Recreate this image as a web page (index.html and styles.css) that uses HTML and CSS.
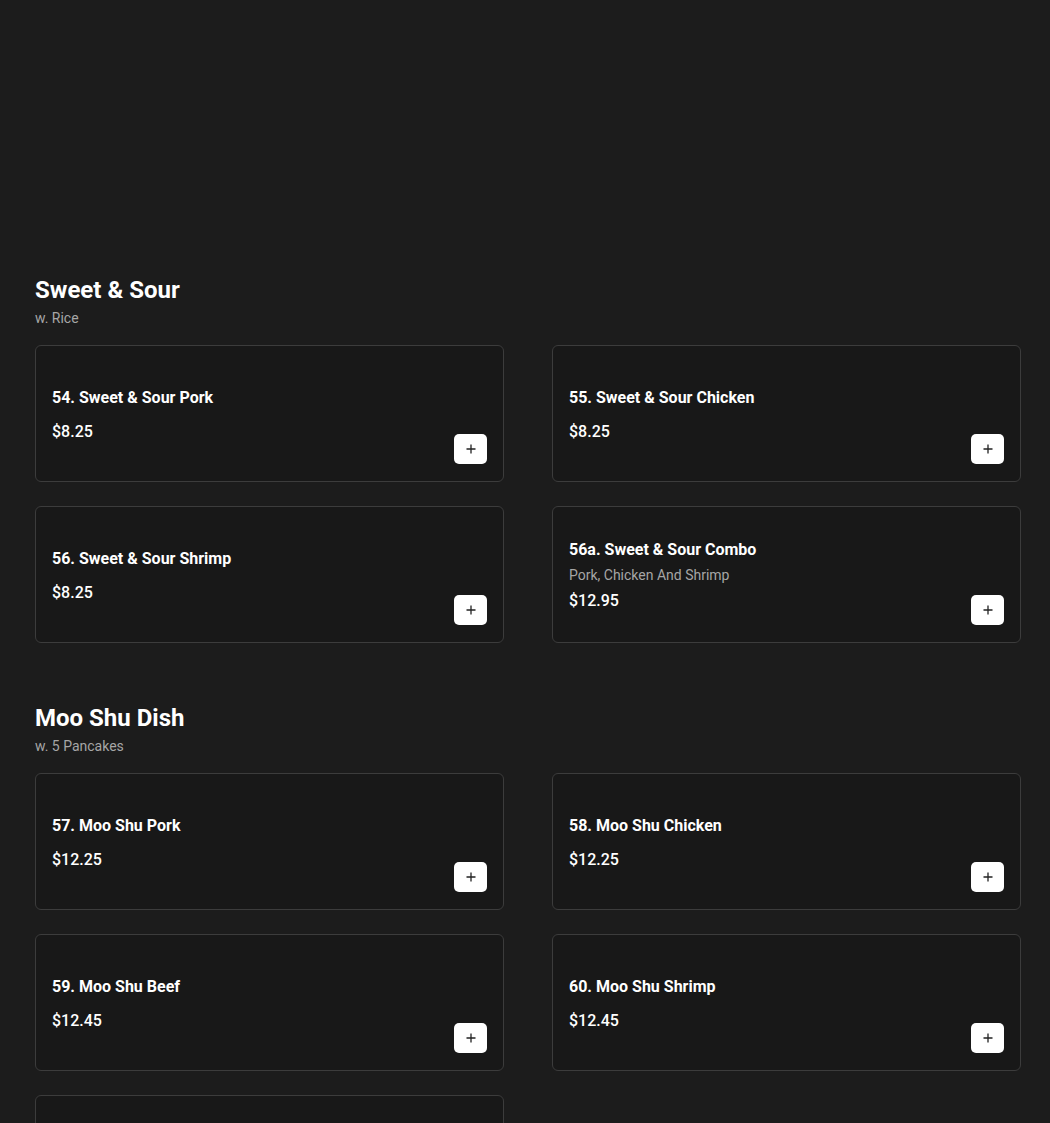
FILE: index.html
```html
<!DOCTYPE html>
<html>
<head>
<meta charset="utf-8">
<link rel="stylesheet" href="styles.css">
</head>
<body>
<main class="menu">
  <section class="category">
    <h2 class="cat-title">Sweet &amp; Sour</h2>
    <p class="cat-sub">w. Rice</p>
    <div class="grid">
      <div class="card"><div class="info"><h3 class="name">54. Sweet &amp; Sour Pork</h3><p class="price">$8.25</p></div><button class="add"><svg viewBox="0 0 12 12" width="12" height="12"><path d="M6 1.5v9M1.5 6h9" stroke="#222" stroke-width="1.3"/></svg></button></div>
      <div class="card"><div class="info"><h3 class="name">55. Sweet &amp; Sour Chicken</h3><p class="price">$8.25</p></div><button class="add"><svg viewBox="0 0 12 12" width="12" height="12"><path d="M6 1.5v9M1.5 6h9" stroke="#222" stroke-width="1.3"/></svg></button></div>
      <div class="card"><div class="info"><h3 class="name">56. Sweet &amp; Sour Shrimp</h3><p class="price">$8.25</p></div><button class="add"><svg viewBox="0 0 12 12" width="12" height="12"><path d="M6 1.5v9M1.5 6h9" stroke="#222" stroke-width="1.3"/></svg></button></div>
      <div class="card"><div class="info"><h3 class="name">56a. Sweet &amp; Sour Combo</h3><p class="desc">Pork, Chicken And Shrimp</p><p class="price">$12.95</p></div><button class="add"><svg viewBox="0 0 12 12" width="12" height="12"><path d="M6 1.5v9M1.5 6h9" stroke="#222" stroke-width="1.3"/></svg></button></div>
    </div>
  </section>
  <section class="category">
    <h2 class="cat-title">Moo Shu Dish</h2>
    <p class="cat-sub">w. 5 Pancakes</p>
    <div class="grid">
      <div class="card"><div class="info"><h3 class="name">57. Moo Shu Pork</h3><p class="price">$12.25</p></div><button class="add"><svg viewBox="0 0 12 12" width="12" height="12"><path d="M6 1.5v9M1.5 6h9" stroke="#222" stroke-width="1.3"/></svg></button></div>
      <div class="card"><div class="info"><h3 class="name">58. Moo Shu Chicken</h3><p class="price">$12.25</p></div><button class="add"><svg viewBox="0 0 12 12" width="12" height="12"><path d="M6 1.5v9M1.5 6h9" stroke="#222" stroke-width="1.3"/></svg></button></div>
      <div class="card"><div class="info"><h3 class="name">59. Moo Shu Beef</h3><p class="price">$12.45</p></div><button class="add"><svg viewBox="0 0 12 12" width="12" height="12"><path d="M6 1.5v9M1.5 6h9" stroke="#222" stroke-width="1.3"/></svg></button></div>
      <div class="card"><div class="info"><h3 class="name">60. Moo Shu Shrimp</h3><p class="price">$12.45</p></div><button class="add"><svg viewBox="0 0 12 12" width="12" height="12"><path d="M6 1.5v9M1.5 6h9" stroke="#222" stroke-width="1.3"/></svg></button></div>
      <div class="card"><div class="info"><h3 class="name">61. Moo Shu Vegetable</h3><p class="price">$11.25</p></div><button class="add"><svg viewBox="0 0 12 12" width="12" height="12"><path d="M6 1.5v9M1.5 6h9" stroke="#222" stroke-width="1.3"/></svg></button></div>
    </div>
  </section>
</main>
</body>
</html>
```
FILE: styles.css
```css
* { box-sizing: border-box; }
html, body { margin: 0; padding: 0; background: #1c1c1c; }
body { font-family: Roboto, "Liberation Sans", sans-serif; color: #fff; }
.menu { width: 986px; margin-left: 35px; padding-top: 274px; }
.category { margin-bottom: 59px; }
.cat-title { margin: 0; font-size: 24px; line-height: 32px; font-weight: 700; color: #fff; }
.cat-sub { margin: 0; margin-top: 2px; font-size: 14px; line-height: 20px; color: #a6a6a6; }
.grid { display: grid; grid-template-columns: 1fr 1fr; column-gap: 48px; row-gap: 24px; margin-top: 17px; }
.card { height: 137px; background: #181818; border: 1px solid #3c3c3c; border-radius: 6px; padding: 16px; display: flex; align-items: center; justify-content: space-between; }
.info { display: flex; flex-direction: column; margin-top: 2px; }
.name { margin: 0; font-size: 16px; line-height: 20px; font-weight: 700; color: #fff; }
.desc { margin: 5px 0 0; font-size: 14px; line-height: 20px; color: #a6a6a6; }
.price { margin: 14px 0 0; font-size: 16px; line-height: 20px; font-weight: 500; color: #fff; }
.desc + .price { margin-top: 6px; }
.add { align-self: flex-end; width: 33px; height: 30px; border: none; border-radius: 5px; background: #fff; display: flex; align-items: center; justify-content: center; padding: 0; margin-bottom: 1px; }
.add svg { display: block; }
```
